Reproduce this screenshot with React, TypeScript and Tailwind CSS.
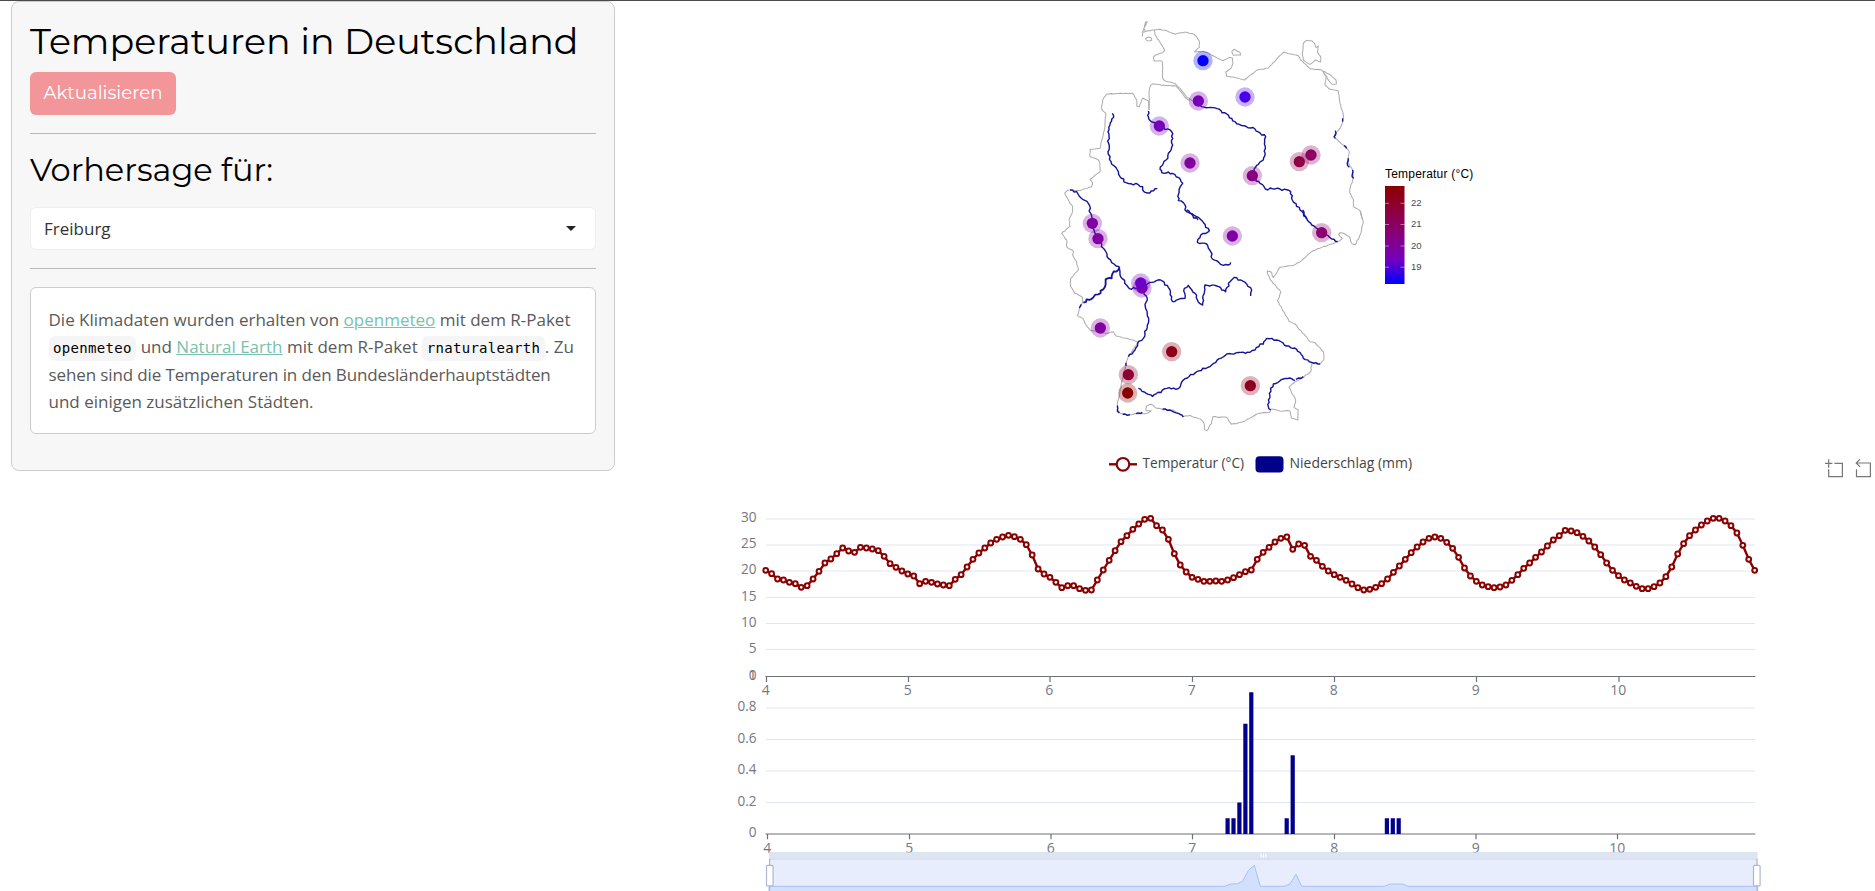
import React from "react";

type Pt = [number, number];

const parse = (s: string): Pt[] =>
  s.trim().split(/\s+/).map((p) => p.split(",").map(Number) as Pt);

/* Subdivides a polyline and nudges the inserted points so it reads as a natural line. */
function natural(s: string, amp: number): string {
  const pts = parse(s);
  const out: Pt[] = [pts[0]];
  let k = 1;
  for (let i = 1; i < pts.length; i++) {
    const [x0, y0] = pts[i - 1];
    const [x1, y1] = pts[i];
    const len = Math.hypot(x1 - x0, y1 - y0);
    const n = Math.max(1, Math.round(len / 7));
    for (let j = 1; j < n; j++) {
      k++;
      const d = Math.sin(k * 12.9898 + k * k * 0.7) * amp;
      const t = j / n;
      out.push([
        x0 + (x1 - x0) * t - ((y1 - y0) / len) * d,
        y0 + (y1 - y0) * t + ((x1 - x0) / len) * d,
      ]);
    }
    out.push([x1, y1]);
  }
  return out.map(([x, y]) => `${x.toFixed(1)},${y.toFixed(1)}`).join(" ");
}

const BORDERS = [
  "327,300 328,240 332,226 340,221 365,226 405,227 412,232 430,255 440,267 450,271",
  "458,272 440,262 420,235 405,220 378,214 368,206 367,155 362,152 342,153 340,142 345,136 368,128 374,121 360,97 345,75 343,60 318,64 307,66 307,80",
  "308,66 313,52 322,35 317,36 312,56 316,63",
  "318,84 325,81 334,84 335,91 322,93 317,88 318,84",
  "343,60 360,58 380,62 405,73 425,68 440,67 463,73 478,93 478,112 463,126 490,124 510,132 547,152 568,142 578,145 579,160 573,175 557,186 560,199 580,201 614,210 650,181 685,174 730,127 775,137 782,150 812,177 845,180 858,200 855,225 870,238 895,243 900,280 911,320 908,335 900,355 884,372 884,383 915,410 928,425 923,455 938,480 940,505 930,535 929,548 941,570 940,590 960,602 968,630",
  "575,125 582,118 600,127 602,135 580,136 575,125",
  "790,100 800,91 815,92 824,100 828,113 835,108 832,128 842,140 842,156 825,150 818,158 810,163 790,150 787,130 790,100",
  "850,183 872,195 888,210 889,222 875,222 862,205 850,183",
  "98,605 98,590 90,580 74,550 85,540 120,542 155,530 158,520 150,508 180,485 180,460 174,449 150,440 150,418 180,415 195,350 197,310 185,298 188,270 200,252 278,250 290,270 290,288 298,290 308,264 325,272 327,300",
];

const BORDERS_SOUTH = [
  "960,2 968,28 970,38 960,75 946,104 935,100 928,80 915,72 900,68 896,73 907,85 900,92 890,96 820,122 800,138 785,152 770,160 760,166 720,172 700,202 692,185 682,183 682,190 690,208 723,247 712,272 748,335 765,342 810,395 825,398 850,425 851,450 840,463 815,460 812,485 780,508 765,515 747,532 767,570 762,592 775,600 774,630 755,625 750,603 735,602 720,603 692,597 690,606 650,612 610,635 575,643 560,622 518,620 515,640 500,662 493,658 492,640 482,628 450,616 430,620 420,612 400,600 370,600 345,592 335,583 320,588 318,602 334,602 322,610 300,610 265,614 240,610 232,600 233,575 240,545 248,505 258,460 265,440 290,405 293,395",
  "293,395 240,380 228,377 220,365 205,370 152,362 135,340 128,325 112,316 120,290 128,275 128,263 105,250 92,230 92,205 115,180 110,155 98,135 101,125 80,110 80,90 65,70 90,50 88,25 98,5",
];

const RIVERS = [
  "217,310 221,322 210,345 204,365 206,400 204,425 213,455 235,485 240,500 258,518 295,524 308,530 308,540 322,549 352,536",
  "325,303 327,328 357,347 395,365 398,405 378,450 360,478 365,488 385,486 405,494 428,520 417,540 415,572 430,578 440,605 474,630",
  "474,272 485,290 512,292 543,302 585,335 605,347 645,357 677,380 676,410 670,450 650,466 636,497 660,520 676,537 720,537 752,545 757,570 780,600 800,628",
  "90,540 110,545 128,568 145,580 152,610 155,640",
  "908,325 908,335",
  "886,362 888,370 882,380 886,385",
  "912,407 920,415",
  "925,445 922,458 928,472",
  "938,480 937,492 941,505",
];

const RIVERS_SOUTH = [
  "440,0 475,22 508,62 482,75 472,97 500,102 512,125 517,147 530,152 550,166 565,165 572,157",
  "788,0 800,25 815,45 843,68 870,83 893,95",
  "155,40 173,85 190,115 205,145 222,162 237,170 240,195 268,236 300,232 305,235 322,270 315,283 326,325 322,345 310,385 293,400 285,420 265,440",
  "258,458 258,468",
  "305,228 330,217 362,210 385,232 398,275 415,268 435,265 433,235 445,226 465,250 480,281 488,285 495,225 530,228 557,245 570,215 583,202 620,222 635,240 632,258",
  "295,535 338,559 380,535 415,536 430,510 470,485 515,465 560,432 630,427 645,420 660,402 670,402 680,385 710,390 740,408 770,418 790,445 815,457 840,462",
  "765,511 755,506 730,507 700,522 688,550 685,590 692,600",
  "768,508 790,500",
  "232,587 232,603 238,609",
  "248,613 270,614",
  "288,611 307,607",
  "368,597 390,600 415,610 430,621",
];

const MOSELLE = "239,172 228,185 218,190 215,205 197,208 190,238 182,242 175,253 160,262 140,268 130,278";

const CITIES: [number, number, string][] = [
  [488, 151, "#0000ff"],
  [614, 260, "#4800ee"],
  [474, 272, "#7800b6"],
  [357, 347, "#7600ba"],
  [449, 458, "#82009e"],
  [636, 496, "#880080"],
  [777, 454, "#900048"],
  [812, 434, "#8e0062"],
  [156, 639, "#8000a4"],
  [173, 685, "#8000a6"],
  [576, 677, "#8000a4"],
  [844, 667, "#8c0072"],
  [305, 833, "#7a00b0"],
  [301, 818, "#6c00c6"],
  [180, 953, "#82009c"],
  [394, 1024, "#8e0018"],
  [264, 1093, "#8f0034"],
  [262, 1148, "#8b0000"],
  [630, 1126, "#8e0020"],
];

function GermanyMap() {
  return (
    <svg className="h-[430px] w-[340px] shrink-0" viewBox="0 0 1020 1290" fill="none" strokeLinejoin="round">
      <g stroke="#adadad" strokeWidth="3.1">
        {BORDERS.map((b) => (
          <polyline key={b} points={natural(b, 0.8)} />
        ))}
        <g transform="translate(0 600)">
          {BORDERS_SOUTH.map((b) => (
            <polyline key={b} points={natural(b, 1.2)} />
          ))}
        </g>
      </g>
      <g stroke="#14149a" strokeWidth="4.2">
        {RIVERS.map((r) => (
          <polyline key={r} points={natural(r, 3)} />
        ))}
        <g transform="translate(0 600)">
          {RIVERS_SOUTH.map((r) => (
            <polyline key={r} points={natural(r, 2.4)} />
          ))}
          <polyline points={natural(MOSELLE, 4)} strokeWidth="5.5" />
          <polyline points="124,283 118,294" />
        </g>
      </g>
      {CITIES.map(([x, y, c]) => (
        <g key={`${x}-${y}`} fill={c}>
          <circle cx={x + 1} cy={y + 1} r="29" fillOpacity="0.3" />
          <circle cx={x + 1} cy={y + 1} r="17" />
        </g>
      ))}
    </svg>
  );
}

function MapLegend() {
  return (
    <div className="pt-[155px] pl-[5px] font-['Liberation_Sans',Arial,sans-serif] text-black">
      <div className="text-[12px] leading-[18px] tracking-[0.2px] whitespace-nowrap">Temperatur (°C)</div>
      <div className="mt-[3px] flex">
        <svg className="h-[98px] w-[20px]" viewBox="0 0 20 98">
          <defs>
            <linearGradient id="heat" x1="0" y1="0" x2="0" y2="1">
              <stop offset="0" stopColor="#8b0000" />
              <stop offset="0.25" stopColor="#8f003c" />
              <stop offset="0.5" stopColor="#88007c" />
              <stop offset="0.75" stopColor="#7400be" />
              <stop offset="1" stopColor="#0000ff" />
            </linearGradient>
          </defs>
          <rect width="19.5" height="98" fill="url(#heat)" />
          <path d="M0 17.3h4M15.5 17.3h4M0 38.5h4M15.5 38.5h4M0 60h4M15.5 60h4M0 81.2h4M15.5 81.2h4" stroke="#fff" strokeOpacity="0.45" />
        </svg>
        <div className="flex flex-col pt-[6px] pl-[6px] text-[9.6px] leading-[21.3px] text-[#4d4d4d]">
          {["22", "21", "20", "19"].map((n) => (
            <span key={n}>{n}</span>
          ))}
        </div>
      </div>
    </div>
  );
}

/* Hourly temperature trace, in thirds of a pixel below y = 500. */
const TRACE = [
  211, 221, 237, 240, 247, 251, 262, 257, 237, 214, 189, 177, 161, 144, 153, 157, 142, 144, 147, 152, 169, 191, 202, 213,
  222, 228, 251, 244, 247, 252, 255, 257, 238, 224, 201, 178, 159, 144, 129, 118, 111, 106, 110, 118, 134, 165, 207, 222,
  232, 247, 263, 257, 257, 266, 271, 270, 240, 210, 181, 152, 125, 107, 88, 72, 58, 55, 77, 90, 118, 161, 195, 216,
  232, 238, 244, 244, 243, 244, 240, 233, 224, 215, 210, 178, 157, 142, 126, 115, 111, 148, 132, 136, 169, 181, 199, 213,
  224, 232, 241, 252, 263, 270, 268, 262, 251, 237, 217, 198, 178, 158, 141, 126, 115, 111, 115, 127, 145, 172, 204, 228,
  244, 255, 260, 263, 261, 255, 241, 224, 205, 189, 172, 156, 138, 120, 107, 91, 93, 98, 109, 123, 141, 164, 189, 211,
  227, 240, 249, 259, 266, 266, 260, 249, 230, 201, 162, 131, 107, 90, 75, 63, 55, 55, 63, 77, 99, 136, 178, 211,
];

const POINTS: Pt[] = TRACE.map((v, i) => [765.7 + i * 5.922, 500 + v / 3]);

const TEMP_AXIS: [string, number][] = [
  ["30", 519], ["25", 545], ["20", 571], ["15", 597.5], ["10", 623.5], ["5", 649.5], ["0", 676.5],
];
const RAIN_AXIS: [string, number][] = [
  ["0.8", 708], ["0.6", 739.5], ["0.4", 771], ["0.2", 802.5], ["0", 834],
];
const DAYS_TOP: [string, number][] = [
  ["4", 766.5], ["5", 908.5], ["6", 1050], ["7", 1192.5], ["8", 1334.5], ["9", 1476.5], ["10", 1619],
];
const DAYS_BOTTOM: [string, number][] = [
  ["4", 767.5], ["5", 909.5], ["6", 1051], ["7", 1192.5], ["8", 1334.5], ["9", 1476], ["10", 1617.5],
];
const RAIN: [number, number][] = [
  [1227.6, 0.1], [1233.5, 0.1], [1239.4, 0.2], [1245.4, 0.7], [1251.3, 0.9],
  [1286.7, 0.1], [1292.7, 0.5], [1386.9, 0.1], [1392.8, 0.1], [1398.7, 0.1],
];

function Forecast() {
  return (
    <svg
      className="block h-[451px] w-[1245px] shrink-0 font-['Open_Sans','Noto_Sans',sans-serif]"
      viewBox="630 440 1245 451"
      fontSize="14"
    >
      <g>
        <path d="M1109 464.3h28" stroke="#8b0000" strokeWidth="2.4" />
        <circle cx="1123" cy="464.3" r="6.3" fill="#fff" stroke="#8b0000" strokeWidth="2.2" />
        <text x="1142.5" y="468" fill="#444" textLength="101.5" lengthAdjust="spacingAndGlyphs">Temperatur (°C)</text>
        <rect x="1255.5" y="456.2" width="28" height="16.4" rx="4" fill="#00008b" />
        <text x="1289.5" y="468" fill="#444" textLength="122.5" lengthAdjust="spacingAndGlyphs">Niederschlag (mm)</text>
      </g>

      <g stroke="#777" strokeWidth="1.2" fill="none">
        <path d="M1828.7 459.3v8.4M1825 463.4h7.4M1834.4 463.4h8v13.3h-13.7v-7.5" />
        <path d="M1860 459.2l-3.8 3.8 3.8 3.9M1856.2 463h14.2v13.7h-13.9v-7.5" />
      </g>

      <g stroke="#e0e6f1" strokeWidth="1.2">
        {TEMP_AXIS.slice(0, -1).concat(RAIN_AXIS.slice(0, -1)).map(([n, y]) => (
          <path key={n + y} d={`M766 ${y}H1755`} />
        ))}
      </g>
      <g fill="#767881" textAnchor="end">
        {TEMP_AXIS.concat(RAIN_AXIS).map(([n, y]) => (
          <text key={n + y} x="756.5" y={y + 3.2} textLength={n.length === 3 ? 19 : n.length * 7.8} lengthAdjust="spacingAndGlyphs">{n}</text>
        ))}
        <text x="756.5" y="679.7">1</text>
      </g>
      <g stroke="#6e7079" strokeWidth="1.2">
        <path d="M765.5 676.5H1755.3" />
        <path d="M765.5 834H1755.3" />
        {DAYS_TOP.map(([n, x]) => <path key={n} d={`M${x} 676.5v5.5`} />)}
        {DAYS_BOTTOM.map(([n, x]) => <path key={n} d={`M${x} 834v5.3`} />)}
      </g>
      <g fill="#767881" textAnchor="middle">
        {DAYS_TOP.map(([n, x]) => <text key={n} x={x - 0.7} y="695.3">{n}</text>)}
        {DAYS_BOTTOM.map(([n, x]) => <text key={n} x={x - 0.2} y="852.6">{n}</text>)}
      </g>

      <polyline points={POINTS.map((p) => p.join(",")).join(" ")} fill="none" stroke="#8b0000" strokeWidth="2.4" />
      <g fill="#fff" stroke="#8b0000" strokeWidth="2">
        {POINTS.map(([x, y]) => <circle key={x} cx={x} cy={y} r="2.4" />)}
      </g>

      <g fill="#00008b">
        {RAIN.map(([x, v]) => (
          <rect key={x} x={x - 2.1} y={834 - v * 157.5} width="4.2" height={v * 157.5} />
        ))}
      </g>

      <g>
        <rect x="769" y="852" width="988.7" height="7.3" fill="#d2dbee" fillOpacity="0.75" />
        <rect x="769" y="859.3" width="988.7" height="40" fill="#e7edfd" />
        <polygon
          points="769,886.3 1225,886.3 1230,884.2 1237.3,883.7 1242.7,881.3 1248.3,870.5 1254.3,865.4 1260.3,886.3 1284,886.3 1290,884 1296,874.3 1301.7,886.3 1384.3,886.3 1390,884 1402.7,884 1408,886.3 1757.7,886.3 1757.7,900 769,900"
          fill="#d3e0fd"
          stroke="#a9c0f6"
          strokeWidth="1"
        />
        <path d="M769 859.3H1757.7" stroke="#d2dbee" />
        <path d="M769.6 859v32M1757 859v32" stroke="#acb8d1" strokeWidth="1.2" />
        <path d="M1261.2 853.8v3.6M1263.5 853.8v3.6M1265.8 853.8v3.6" stroke="#fff" strokeWidth="1.2" />
        <rect x="766.5" y="865.3" width="6.6" height="20.6" rx="1" fill="#fff" stroke="#acb8d1" strokeWidth="1.2" />
        <rect x="1753.5" y="865.3" width="6.6" height="20.6" rx="1" fill="#fff" stroke="#acb8d1" strokeWidth="1.2" />
      </g>
    </svg>
  );
}

function Code({ children }: { children: React.ReactNode }) {
  return (
    <code className="inline-block h-[25px] rounded-md bg-[#f5f5f5] px-[4.6px] align-baseline font-['DejaVu_Sans_Mono',monospace] text-[14px] leading-[25px] tracking-[0.3px] text-black">
      {children}
    </code>
  );
}

function Sidebar() {
  const heading = "font-[Montserrat,Inter,sans-serif] whitespace-nowrap text-black";
  return (
    <aside className="flex h-[470px] w-[604px] flex-col rounded-lg border border-[#ccc] bg-[#f7f7f7] px-[18px]">
      <h1 className={`${heading} mt-[16px] h-[47px] text-[36.4px] leading-[46px] font-[450]`}>
        Temperaturen in Deutschland
      </h1>
      <button className="mt-[7px] h-[43px] w-[146px] rounded-md bg-[#f3969a] pb-[2px] font-[Montserrat,Inter,sans-serif] text-[18.2px] leading-[41px] text-white">
        Aktualisieren
      </button>
      <hr className="mt-[18px] border-t border-[#b9b9b9]" />
      <h2 className={`${heading} mt-[16px] h-[40px] text-[32px] leading-[40px] font-[450]`}>Vorhersage für:</h2>
      <div className="mt-[17px] flex h-[43px] items-center justify-between rounded-md border border-[#eee] bg-white pr-[19px] pl-[13px] font-['Open_Sans','Noto_Sans',sans-serif] text-[17px] text-[#333]">
        <span>Freiburg</span>
        <svg className="h-[5px] w-[10px]" viewBox="0 0 10 5">
          <path d="M0 0h10L5 5z" fill="#222" />
        </svg>
      </div>
      <hr className="mt-[18px] border-t border-[#b9b9b9]" />
      <p className="mt-[18px] h-[147px] rounded-md border border-[#ccc] bg-white px-[17.5px] pt-[18px] font-['Open_Sans','Noto_Sans',sans-serif] text-[17px] leading-[27.3px] whitespace-nowrap text-[#5a5a5a]">
        <span className="block h-[27.3px]">
          Die Klimadaten wurden erhalten von <a className="text-[#78c2ad] underline">openmeteo</a> mit dem R-Paket
        </span>
        <span className="block h-[27.3px]">
          <Code>openmeteo</Code> und <a className="text-[#78c2ad] underline">Natural Earth</a> mit dem R-Paket{" "}
          <Code>rnaturalearth</Code>. Zu
        </span>
        <span className="block h-[27.3px] tracking-[-0.12px]">sehen sind die Temperaturen in den Bundesländerhauptstädten</span>
        <span className="block h-[27.3px]">und einigen zusätzlichen Städten.</span>
      </p>
    </aside>
  );
}

export default function App() {
  return (
    <div className="flex h-[891px] w-[1875px] overflow-hidden border-t border-[#4a4a4a] bg-white pl-[11px]">
      <Sidebar />
      <main className="ml-[15px] flex flex-col">
        <div className="flex h-[439px] pt-[9px] pl-[410px]">
          <GermanyMap />
          <MapLegend />
        </div>
        <Forecast />
      </main>
    </div>
  );
}
